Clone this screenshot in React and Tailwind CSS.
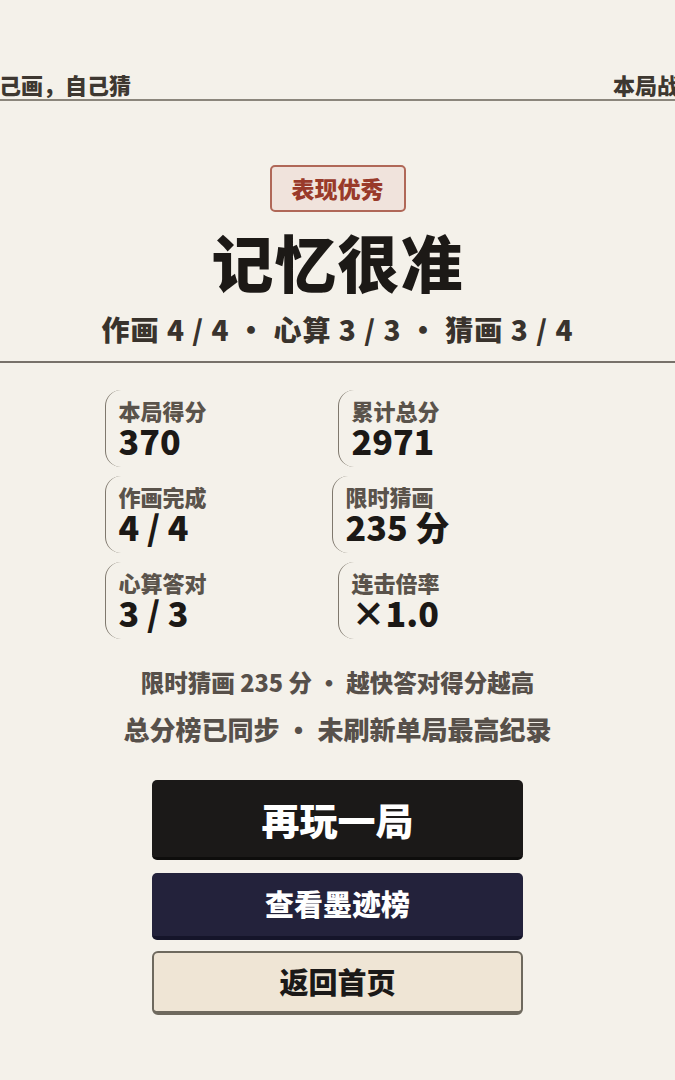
import React from "react";

const font = { fontFamily: '"Noto Sans CJK SC", "Noto Sans", sans-serif' };

function Stat({ label, value, className = "" }) {
  return (
    <div
      className={
        "h-[77px] rounded-l-[16px] border-l-[1.5px] border-[#7f786d] pl-[13px] pt-[7px] " +
        className
      }
    >
      <div className="text-[22px] font-black leading-[26px] text-[#5a534b]">{label}</div>
      <div className="mt-[1px] text-[34px] font-black leading-[34px] text-[#1c1916]">{value}</div>
    </div>
  );
}

export default function App() {
  return (
    <div
      className="min-h-[1080px] w-full overflow-hidden bg-[#f4f1ea] text-[#1c1916]"
      style={font}
    >
      {/* top bar */}
      <div className="pt-[70px]">
        <div className="-ml-[23px] -mr-[26px] flex justify-between text-[22px] font-black leading-[28px] text-[#3e3831]">
          <span>自己画，自己猜</span>
          <span>本局战绩</span>
        </div>
        <div className="mt-[1px] h-[2px] bg-[#8b867c]" />
      </div>

      {/* result header */}
      <div className="flex flex-col items-center">
        <div className="mt-[64px] flex h-[47px] w-[136px] items-center justify-center rounded-[5px] border-2 border-[#b06858] bg-[#f0e3dc] text-[23px] font-black text-[#993a2a]">
          表现优秀
        </div>
        <h1 className="mt-[7px] text-[62px] font-black leading-[84px] tracking-[1px] text-[#1c1916]">
          记忆很准
        </h1>
        <div className="mt-[9px] text-[28px] font-black leading-[34px] tracking-[1px] text-[#39332d]">
          作画 4 / 4 · 心算 3 / 3 · 猜画 3 / 4
        </div>
      </div>

      <div className="mt-[15px] h-[1.5px] bg-[#77716a]" />

      {/* stats */}
      <div className="mx-auto mt-[27px] grid w-[466px] grid-cols-2 gap-y-[9px]">
        <Stat label="本局得分" value="370" />
        <Stat label="累计总分" value="2971" />
        <Stat label="作画完成" value="4 / 4" />
        <Stat label="限时猜画" value="235 分" className="-ml-[6px]" />
        <Stat label="心算答对" value="3 / 3" />
        <Stat label="连击倍率" value="×1.0" />
      </div>

      {/* notes */}
      <div className="mt-[28px] flex flex-col items-center font-black leading-[30px] text-[#57504a]">
        <p className="text-[23.5px]">限时猜画 235 分 · 越快答对得分越高</p>
        <p className="mt-[17px] text-[26px]">总分榜已同步 · 未刷新单局最高纪录</p>
      </div>

      {/* actions */}
      <div className="mx-auto mt-[36px] flex w-[371px] flex-col">
        <button className="flex h-[80px] items-center justify-center rounded-[5px] border-b-[3px] border-[#0e0d0c] bg-[#1b1918] text-[38px] font-black text-white">
          再玩一局
        </button>
        <button className="mt-[13px] flex h-[67px] items-center justify-center rounded-[5px] border-b-[4px] border-[#15152a] bg-[#23223b] text-[29px] font-black text-white">
          查看墨迹榜
        </button>
        <button className="mt-[11px] flex h-[64px] items-center justify-center rounded-[6px] border-2 border-b-[4px] border-[#6e695e] bg-[#efe5d5] text-[29px] font-black text-[#1b1918]">
          返回首页
        </button>
      </div>
    </div>
  );
}
